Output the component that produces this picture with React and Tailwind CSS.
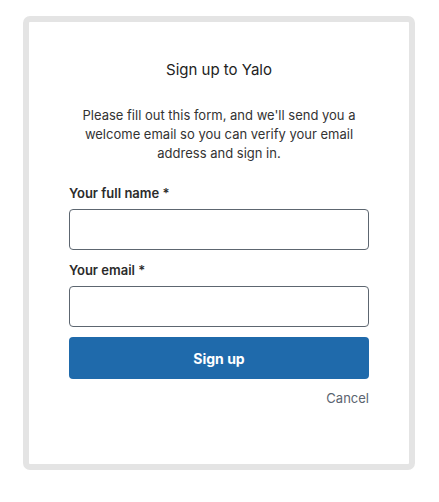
import React from "react";

const Field = ({ label, type = "text", className = "" }) => {
  return (
    <div className={`flex flex-col ${className}`}>
      <label className="text-[13px] leading-[18px] font-semibold text-[#2b2b2b]">
        {label}
      </label>
      <input
        type={type}
        className="mt-[7px] h-[41px] w-full rounded-[4px] border border-[#5d6670] bg-white px-3 text-[13px] outline-none"
      />
    </div>
  );
};

const App = () => {
  return (
    <main
      className="min-h-[502px] w-full bg-white pt-4 pl-[23px]"
      style={{ fontFamily: "Inter, 'Noto Sans', 'Liberation Sans', sans-serif" }}
    >
      <div className="h-[454px] w-[392px] rounded-[7px] border-[6px] border-[#e4e4e4] bg-white px-[40px] pt-[38px]">
        <h1 className="text-center text-[15px] leading-5 font-normal text-[#222]">
          Sign up to Yalo
        </h1>
        <p className="mt-[26px] text-center text-[13px] leading-[19px] text-[#333]">
          Please fill out this form, and we'll send you a welcome email so you
          can verify your email address and sign in.
        </p>
        <form className="mt-[21px] flex flex-col">
          <Field label="Your full name *" />
          <Field label="Your email *" type="email" className="mt-[11px]" />
          <button
            type="button"
            className="mt-[10px] h-[42px] w-full rounded-[4px] bg-[#1f6aab] text-[14px] font-bold text-white"
          >
            Sign up
          </button>
          <div className="mt-[10px] flex justify-end">
            <a className="text-[13px] leading-[18px] text-[#5b6470]">Cancel</a>
          </div>
        </form>
      </div>
    </main>
  );
};

export default App;
